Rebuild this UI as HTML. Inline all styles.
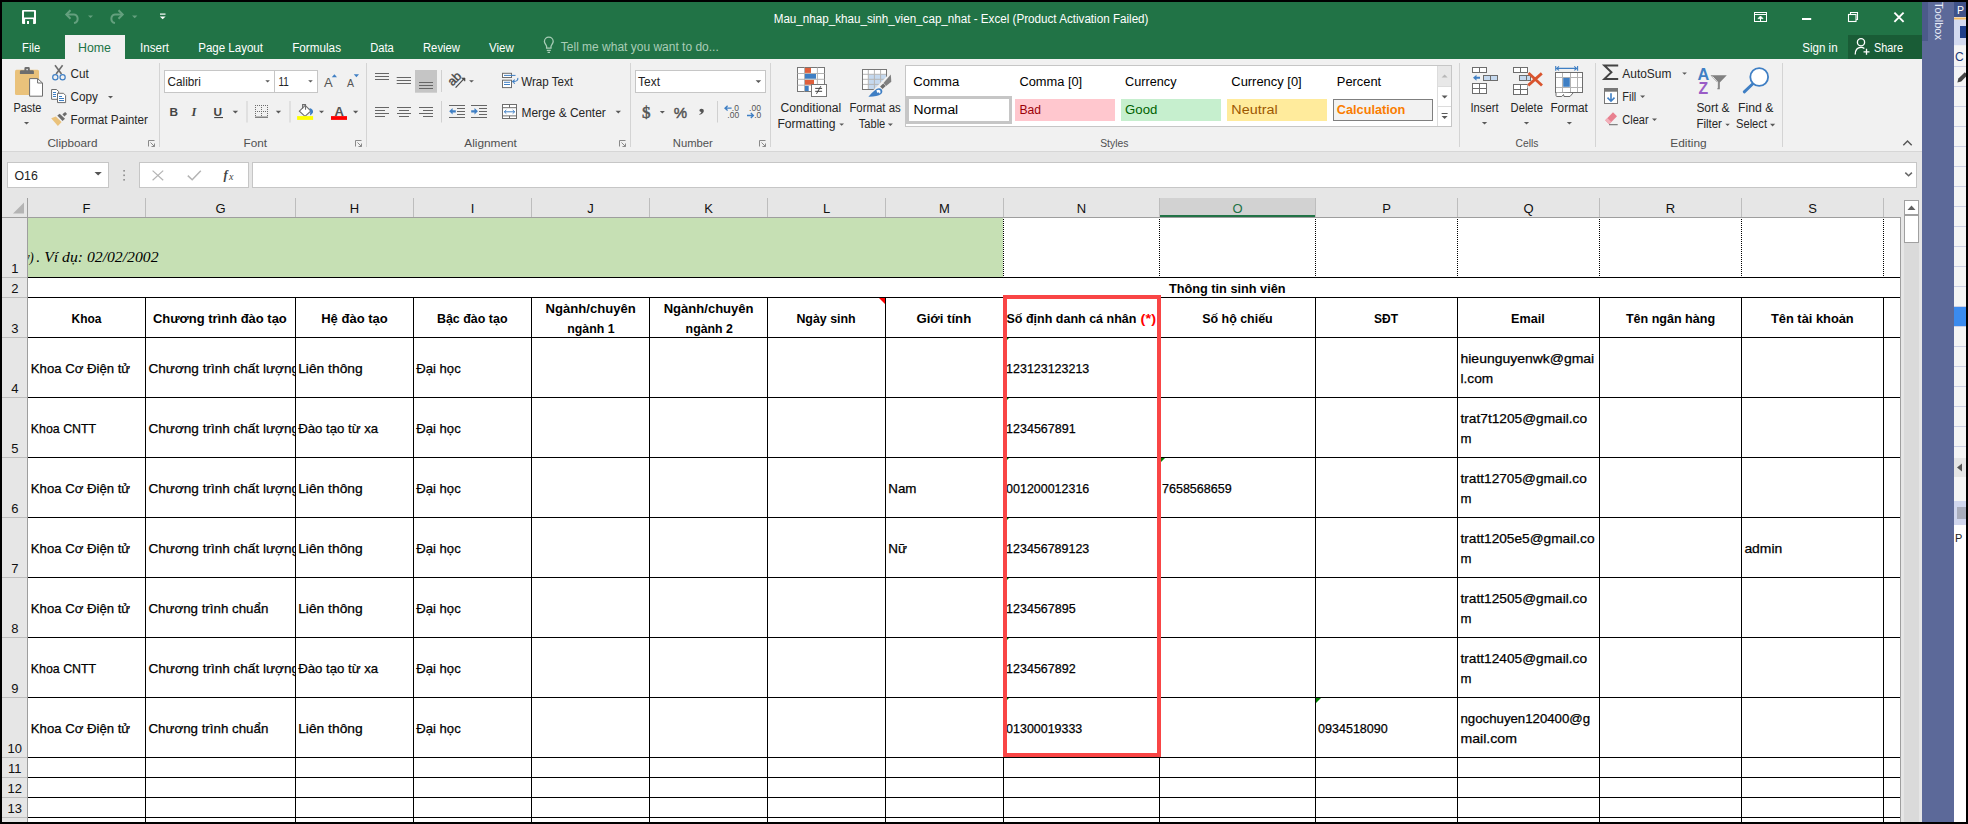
<!DOCTYPE html>
<html><head><meta charset="utf-8"><title>Excel</title>
<style>html,body{margin:0;padding:0;background:#000;overflow:hidden;font-family:"Liberation Sans",sans-serif}svg{display:block}text{white-space:pre}</style>
</head><body>
<svg width="1968" height="824" viewBox="0 0 1968 824" font-family="Liberation Sans, sans-serif">
<defs>
<clipPath id="clipF"><rect x="28" y="218" width="975" height="59"/></clipPath>
<clipPath id="clipG"><rect x="146" y="298" width="149" height="460"/></clipPath>
</defs>
<rect x="0" y="0" width="1968" height="824" fill="#000" />
<rect x="2" y="2" width="1920" height="57" fill="#217346" />
<rect x="2" y="59" width="1920" height="92" fill="#f1f1f1" />
<rect x="2" y="151" width="1920" height="1" fill="#d6d6d6" />
<rect x="2" y="152" width="1920" height="670" fill="#e6e6e6" />
<text x="773.7" y="23" font-size="12" fill="#ffffff" textLength="374.8" lengthAdjust="spacingAndGlyphs" >Mau_nhap_khau_sinh_vien_cap_nhat - Excel (Product Activation Failed)</text>
<rect x="65" y="35" width="60" height="24" fill="#f1f1f1" />
<text x="22.1" y="51.5" font-size="12" fill="#ffffff" textLength="18.0" lengthAdjust="spacingAndGlyphs" >File</text>
<text x="140" y="51.5" font-size="12" fill="#ffffff" textLength="29.0" lengthAdjust="spacingAndGlyphs" >Insert</text>
<text x="198.2" y="51.5" font-size="12" fill="#ffffff" textLength="64.8" lengthAdjust="spacingAndGlyphs" >Page Layout</text>
<text x="292.2" y="51.5" font-size="12" fill="#ffffff" textLength="48.8" lengthAdjust="spacingAndGlyphs" >Formulas</text>
<text x="370.2" y="51.5" font-size="12" fill="#ffffff" textLength="23.6" lengthAdjust="spacingAndGlyphs" >Data</text>
<text x="423" y="51.5" font-size="12" fill="#ffffff" textLength="36.9" lengthAdjust="spacingAndGlyphs" >Review</text>
<text x="488.9" y="51.5" font-size="12" fill="#ffffff" textLength="24.9" lengthAdjust="spacingAndGlyphs" >View</text>
<text x="78" y="51.5" font-size="12" fill="#217346" textLength="33.0" lengthAdjust="spacingAndGlyphs" >Home</text>
<text x="560.8" y="51" font-size="12" fill="#a9cdb7" textLength="158.0" lengthAdjust="spacingAndGlyphs" >Tell me what you want to do...</text>
<text x="1802.2" y="51.5" font-size="12" fill="#ffffff" textLength="35.4" lengthAdjust="spacingAndGlyphs" >Sign in</text>
<rect x="1848" y="35" width="74" height="24" fill="#195c36" />
<text x="1874" y="51.5" font-size="12" fill="#ffffff" textLength="29.0" lengthAdjust="spacingAndGlyphs" >Share</text>
<text x="13.4" y="111.7" font-size="12" fill="#262626" textLength="28.0" lengthAdjust="spacingAndGlyphs" >Paste</text>
<text x="70.5" y="78" font-size="12" fill="#262626" textLength="18.3" lengthAdjust="spacingAndGlyphs" >Cut</text>
<text x="70.5" y="100.6" font-size="12" fill="#262626" textLength="27.4" lengthAdjust="spacingAndGlyphs" >Copy</text>
<text x="70.5" y="123.8" font-size="12" fill="#262626" textLength="77.5" lengthAdjust="spacingAndGlyphs" >Format Painter</text>
<text x="47.4" y="146.8" font-size="11" fill="#505050" textLength="50.1" lengthAdjust="spacingAndGlyphs" >Clipboard</text>
<text x="243.5" y="146.8" font-size="11" fill="#505050" textLength="23.5" lengthAdjust="spacingAndGlyphs" >Font</text>
<text x="464.3" y="146.8" font-size="11" fill="#505050" textLength="52.6" lengthAdjust="spacingAndGlyphs" >Alignment</text>
<text x="672.8" y="146.8" font-size="11" fill="#505050" textLength="40.0" lengthAdjust="spacingAndGlyphs" >Number</text>
<text x="1100.2" y="146.8" font-size="11" fill="#505050" textLength="28.2" lengthAdjust="spacingAndGlyphs" >Styles</text>
<text x="1515.6" y="146.8" font-size="11" fill="#505050" textLength="22.8" lengthAdjust="spacingAndGlyphs" >Cells</text>
<text x="1670.3" y="146.8" font-size="11" fill="#505050" textLength="36.3" lengthAdjust="spacingAndGlyphs" >Editing</text>
<rect x="159" y="63" width="1" height="84" fill="#d4d4d4" />
<rect x="366" y="63" width="1" height="84" fill="#d4d4d4" />
<rect x="630" y="63" width="1" height="84" fill="#d4d4d4" />
<rect x="770" y="63" width="1" height="84" fill="#d4d4d4" />
<rect x="1459" y="63" width="1" height="84" fill="#d4d4d4" />
<rect x="1595" y="63" width="1" height="84" fill="#d4d4d4" />
<rect x="1782" y="63" width="1" height="84" fill="#d4d4d4" />
<rect x="164.5" y="70.5" width="110" height="22" fill="#ffffff" stroke="#c6c6c6" stroke-width="1"/>
<rect x="274.5" y="70.5" width="43" height="22" fill="#ffffff" stroke="#c6c6c6" stroke-width="1"/>
<text x="167.6" y="85.9" font-size="12" fill="#222" textLength="33.3" lengthAdjust="spacingAndGlyphs" >Calibri</text>
<text x="278.5" y="85.9" font-size="12" fill="#222" textLength="10.3" lengthAdjust="spacingAndGlyphs" >11</text>
<rect x="635.5" y="70.5" width="130" height="22" fill="#ffffff" stroke="#c6c6c6" stroke-width="1"/>
<text x="638.1" y="85.8" font-size="12" fill="#222" textLength="21.9" lengthAdjust="spacingAndGlyphs" >Text</text>
<text x="521.2" y="85.9" font-size="12" fill="#262626" textLength="51.8" lengthAdjust="spacingAndGlyphs" >Wrap Text</text>
<text x="521.5" y="116.9" font-size="12" fill="#262626" textLength="84.3" lengthAdjust="spacingAndGlyphs" >Merge &amp; Center</text>
<text x="780.6" y="111.9" font-size="12" fill="#262626" textLength="60.7" lengthAdjust="spacingAndGlyphs" >Conditional</text>
<text x="777.4" y="127.8" font-size="12" fill="#262626" textLength="58.0" lengthAdjust="spacingAndGlyphs" >Formatting</text>
<text x="849.4" y="111.9" font-size="12" fill="#262626" textLength="51.3" lengthAdjust="spacingAndGlyphs" >Format as</text>
<text x="858.7" y="127.8" font-size="12" fill="#262626" textLength="26.6" lengthAdjust="spacingAndGlyphs" >Table</text>
<rect x="905.5" y="65.5" width="546" height="61" fill="#ffffff" stroke="#c6c6c6" stroke-width="1"/>
<text x="913.3" y="85.6" font-size="12" fill="#000" textLength="46.0" lengthAdjust="spacingAndGlyphs" >Comma</text>
<text x="1019.4" y="85.6" font-size="12" fill="#000" textLength="62.8" lengthAdjust="spacingAndGlyphs" >Comma [0]</text>
<text x="1125.1" y="85.6" font-size="12" fill="#000" textLength="51.4" lengthAdjust="spacingAndGlyphs" >Currency</text>
<text x="1231.3" y="85.6" font-size="12" fill="#000" textLength="70.4" lengthAdjust="spacingAndGlyphs" >Currency [0]</text>
<text x="1336.8" y="85.6" font-size="12" fill="#000" textLength="44.4" lengthAdjust="spacingAndGlyphs" >Percent</text>
<rect x="907.5" y="97.5" width="103" height="25" fill="#ffffff" stroke="#c6c6c6" stroke-width="3"/>
<text x="913.5" y="113.7" font-size="12" fill="#000" textLength="44.7" lengthAdjust="spacingAndGlyphs" >Normal</text>
<rect x="1015" y="99" width="100" height="22" fill="#ffc7ce" />
<text x="1019.4" y="113.7" font-size="12" fill="#9c0006" textLength="21.6" lengthAdjust="spacingAndGlyphs" >Bad</text>
<rect x="1121" y="99" width="100" height="22" fill="#c6efce" />
<text x="1125.1" y="113.7" font-size="12" fill="#006100" textLength="32.3" lengthAdjust="spacingAndGlyphs" >Good</text>
<rect x="1227" y="99" width="100" height="22" fill="#ffeb9c" />
<text x="1231.3" y="113.7" font-size="12" fill="#9c5700" textLength="46.3" lengthAdjust="spacingAndGlyphs" >Neutral</text>
<rect x="1333.5" y="99.5" width="99" height="21" fill="#f2f2f2" stroke="#7f7f7f" stroke-width="1"/>
<text x="1336.8" y="113.7" font-size="12" fill="#fa7d00" font-weight="bold" textLength="68.6" lengthAdjust="spacingAndGlyphs" >Calculation</text>
<rect x="1437" y="66" width="1" height="60" fill="#dcdcdc" />
<rect x="1438" y="66" width="13" height="20" fill="#e8e8e8" />
<rect x="1438" y="86" width="13" height="1" fill="#dcdcdc" />
<rect x="1438" y="106" width="13" height="1" fill="#dcdcdc" />
<text x="1470.5" y="111.9" font-size="12" fill="#262626" textLength="28.0" lengthAdjust="spacingAndGlyphs" >Insert</text>
<text x="1510.6" y="111.9" font-size="12" fill="#262626" textLength="32.3" lengthAdjust="spacingAndGlyphs" >Delete</text>
<text x="1550.4" y="111.9" font-size="12" fill="#262626" textLength="37.5" lengthAdjust="spacingAndGlyphs" >Format</text>
<text x="1622.3" y="77.5" font-size="12" fill="#262626" textLength="49.1" lengthAdjust="spacingAndGlyphs" >AutoSum</text>
<text x="1622.3" y="100.6" font-size="12" fill="#262626" textLength="14.0" lengthAdjust="spacingAndGlyphs" >Fill</text>
<text x="1622.3" y="123.9" font-size="12" fill="#262626" textLength="26.4" lengthAdjust="spacingAndGlyphs" >Clear</text>
<text x="1696.4" y="111.7" font-size="12" fill="#262626" textLength="33.2" lengthAdjust="spacingAndGlyphs" >Sort &amp;</text>
<text x="1696.4" y="127.9" font-size="12" fill="#262626" textLength="25.5" lengthAdjust="spacingAndGlyphs" >Filter</text>
<text x="1738" y="111.7" font-size="12" fill="#262626" textLength="35.5" lengthAdjust="spacingAndGlyphs" >Find &amp;</text>
<text x="1736" y="127.9" font-size="12" fill="#262626" textLength="31.0" lengthAdjust="spacingAndGlyphs" >Select</text>
<rect x="7.5" y="162.5" width="101" height="25" fill="#ffffff" stroke="#c6c6c6" stroke-width="1"/>
<text x="14.5" y="180" font-size="12" fill="#222" textLength="23.3" lengthAdjust="spacingAndGlyphs" >O16</text>
<rect x="139.5" y="162.5" width="109" height="25" fill="#ffffff" stroke="#c6c6c6" stroke-width="1"/>
<rect x="252.5" y="162.5" width="1664" height="25" fill="#ffffff" stroke="#c6c6c6" stroke-width="1"/>
<rect x="28" y="218" width="1872" height="604" fill="#ffffff" />
<rect x="1159" y="198" width="156" height="19" fill="#d2d2d2" />
<rect x="1159" y="215" width="156" height="2" fill="#217346" />
<rect x="145" y="198" width="1" height="19" fill="#bdbdbd" />
<rect x="295" y="198" width="1" height="19" fill="#bdbdbd" />
<rect x="413" y="198" width="1" height="19" fill="#bdbdbd" />
<rect x="531" y="198" width="1" height="19" fill="#bdbdbd" />
<rect x="649" y="198" width="1" height="19" fill="#bdbdbd" />
<rect x="767" y="198" width="1" height="19" fill="#bdbdbd" />
<rect x="885" y="198" width="1" height="19" fill="#bdbdbd" />
<rect x="1003" y="198" width="1" height="19" fill="#bdbdbd" />
<rect x="1159" y="198" width="1" height="19" fill="#bdbdbd" />
<rect x="1315" y="198" width="1" height="19" fill="#bdbdbd" />
<rect x="1457" y="198" width="1" height="19" fill="#bdbdbd" />
<rect x="1599" y="198" width="1" height="19" fill="#bdbdbd" />
<rect x="1741" y="198" width="1" height="19" fill="#bdbdbd" />
<rect x="1883" y="198" width="1" height="19" fill="#bdbdbd" />
<rect x="2" y="217" width="1898" height="1" fill="#9e9e9e" />
<rect x="27" y="198" width="1" height="624" fill="#9e9e9e" />
<rect x="1900" y="217" width="1" height="605" fill="#9e9e9e" />
<text x="86.5" y="212.8" font-size="13" fill="#111" text-anchor="middle" >F</text>
<text x="220.5" y="212.8" font-size="13" fill="#111" text-anchor="middle" >G</text>
<text x="354.5" y="212.8" font-size="13" fill="#111" text-anchor="middle" >H</text>
<text x="472.5" y="212.8" font-size="13" fill="#111" text-anchor="middle" >I</text>
<text x="590.5" y="212.8" font-size="13" fill="#111" text-anchor="middle" >J</text>
<text x="708.5" y="212.8" font-size="13" fill="#111" text-anchor="middle" >K</text>
<text x="826.5" y="212.8" font-size="13" fill="#111" text-anchor="middle" >L</text>
<text x="944.5" y="212.8" font-size="13" fill="#111" text-anchor="middle" >M</text>
<text x="1081.5" y="212.8" font-size="13" fill="#111" text-anchor="middle" >N</text>
<text x="1237.5" y="212.8" font-size="13" fill="#217346" text-anchor="middle" >O</text>
<text x="1386.5" y="212.8" font-size="13" fill="#111" text-anchor="middle" >P</text>
<text x="1528.5" y="212.8" font-size="13" fill="#111" text-anchor="middle" >Q</text>
<text x="1670.5" y="212.8" font-size="13" fill="#111" text-anchor="middle" >R</text>
<text x="1812.5" y="212.8" font-size="13" fill="#111" text-anchor="middle" >S</text>
<path d="M13 213.5 L24 213.5 L24 202.5 Z" fill="#b4b4b4"/>
<rect x="2" y="277" width="25" height="1" fill="#bdbdbd" />
<rect x="2" y="297" width="25" height="1" fill="#bdbdbd" />
<rect x="2" y="337" width="25" height="1" fill="#bdbdbd" />
<rect x="2" y="397" width="25" height="1" fill="#bdbdbd" />
<rect x="2" y="457" width="25" height="1" fill="#bdbdbd" />
<rect x="2" y="517" width="25" height="1" fill="#bdbdbd" />
<rect x="2" y="577" width="25" height="1" fill="#bdbdbd" />
<rect x="2" y="637" width="25" height="1" fill="#bdbdbd" />
<rect x="2" y="697" width="25" height="1" fill="#bdbdbd" />
<rect x="2" y="757" width="25" height="1" fill="#bdbdbd" />
<rect x="2" y="777" width="25" height="1" fill="#bdbdbd" />
<rect x="2" y="797" width="25" height="1" fill="#bdbdbd" />
<rect x="2" y="817" width="25" height="1" fill="#bdbdbd" />
<text x="14.8" y="272.5" font-size="13" fill="#111" text-anchor="middle" >1</text>
<text x="14.8" y="292.5" font-size="13" fill="#111" text-anchor="middle" >2</text>
<text x="14.8" y="332.5" font-size="13" fill="#111" text-anchor="middle" >3</text>
<text x="14.8" y="392.5" font-size="13" fill="#111" text-anchor="middle" >4</text>
<text x="14.8" y="452.5" font-size="13" fill="#111" text-anchor="middle" >5</text>
<text x="14.8" y="512.5" font-size="13" fill="#111" text-anchor="middle" >6</text>
<text x="14.8" y="572.5" font-size="13" fill="#111" text-anchor="middle" >7</text>
<text x="14.8" y="632.5" font-size="13" fill="#111" text-anchor="middle" >8</text>
<text x="14.8" y="692.5" font-size="13" fill="#111" text-anchor="middle" >9</text>
<text x="14.8" y="752.5" font-size="13" fill="#111" text-anchor="middle" >10</text>
<text x="14.8" y="772.5" font-size="13" fill="#111" text-anchor="middle" >11</text>
<text x="14.8" y="792.5" font-size="13" fill="#111" text-anchor="middle" >12</text>
<text x="14.8" y="812.5" font-size="13" fill="#111" text-anchor="middle" >13</text>
<text x="14.8" y="837.5" font-size="13" fill="#262626" text-anchor="middle" >14</text>
<rect x="28" y="218" width="975" height="59" fill="#c6e0b4" />
<rect x="28" y="277" width="1872" height="1" fill="#000000" />
<rect x="28" y="297" width="1872" height="1" fill="#000000" />
<rect x="28" y="337" width="1872" height="1" fill="#000000" />
<rect x="28" y="397" width="1872" height="1" fill="#000000" />
<rect x="28" y="457" width="1872" height="1" fill="#000000" />
<rect x="28" y="517" width="1872" height="1" fill="#000000" />
<rect x="28" y="577" width="1872" height="1" fill="#000000" />
<rect x="28" y="637" width="1872" height="1" fill="#000000" />
<rect x="28" y="697" width="1872" height="1" fill="#000000" />
<rect x="28" y="757" width="1872" height="1" fill="#000000" />
<rect x="28" y="777" width="1872" height="1" fill="#000000" />
<rect x="28" y="797" width="1872" height="1" fill="#000000" />
<rect x="28" y="817" width="1872" height="1" fill="#000000" />
<line x1="1003.5" y1="219" x2="1003.5" y2="277" stroke="#000" stroke-width="1" stroke-dasharray="1,1"/>
<line x1="1159.5" y1="219" x2="1159.5" y2="277" stroke="#000" stroke-width="1" stroke-dasharray="1,1"/>
<line x1="1315.5" y1="219" x2="1315.5" y2="277" stroke="#000" stroke-width="1" stroke-dasharray="1,1"/>
<line x1="1457.5" y1="219" x2="1457.5" y2="277" stroke="#000" stroke-width="1" stroke-dasharray="1,1"/>
<line x1="1599.5" y1="219" x2="1599.5" y2="277" stroke="#000" stroke-width="1" stroke-dasharray="1,1"/>
<line x1="1741.5" y1="219" x2="1741.5" y2="277" stroke="#000" stroke-width="1" stroke-dasharray="1,1"/>
<line x1="1883.5" y1="219" x2="1883.5" y2="277" stroke="#000" stroke-width="1" stroke-dasharray="1,1"/>
<rect x="145" y="297" width="1" height="525" fill="#000000" />
<rect x="295" y="297" width="1" height="525" fill="#000000" />
<rect x="413" y="297" width="1" height="525" fill="#000000" />
<rect x="531" y="297" width="1" height="525" fill="#000000" />
<rect x="649" y="297" width="1" height="525" fill="#000000" />
<rect x="767" y="297" width="1" height="525" fill="#000000" />
<rect x="885" y="297" width="1" height="525" fill="#000000" />
<rect x="1003" y="297" width="1" height="525" fill="#000000" />
<rect x="1159" y="297" width="1" height="525" fill="#000000" />
<rect x="1315" y="297" width="1" height="525" fill="#000000" />
<rect x="1457" y="297" width="1" height="525" fill="#000000" />
<rect x="1599" y="297" width="1" height="525" fill="#000000" />
<rect x="1741" y="297" width="1" height="525" fill="#000000" />
<rect x="1883" y="297" width="1" height="525" fill="#000000" />
<text x="24" y="261.7" font-size="15.4" fill="#000" font-style="italic" font-family="Liberation Serif" textLength="9.8" lengthAdjust="spacingAndGlyphs" clip-path="url(#clipF)">y)</text>
<text x="36.3" y="261.7" font-size="15.4" fill="#000" font-style="italic" font-family="Liberation Serif" textLength="122.2" lengthAdjust="spacingAndGlyphs" clip-path="url(#clipF)">. Ví dụ: 02/02/2002</text>
<text x="1169" y="292.7" font-size="13" fill="#000" font-weight="bold" textLength="116.5" lengthAdjust="spacingAndGlyphs" >Thông tin sinh viên</text>
<text x="71.5" y="322.7" font-size="13" fill="#000" font-weight="bold" textLength="29.9" lengthAdjust="spacingAndGlyphs" >Khoa</text>
<text x="152.9" y="322.7" font-size="13" fill="#000" font-weight="bold" textLength="133.9" lengthAdjust="spacingAndGlyphs" >Chương trình đào tạo</text>
<text x="321.2" y="322.7" font-size="13" fill="#000" font-weight="bold" textLength="66.6" lengthAdjust="spacingAndGlyphs" >Hệ đào tạo</text>
<text x="436.9" y="322.7" font-size="13" fill="#000" font-weight="bold" textLength="70.6" lengthAdjust="spacingAndGlyphs" >Bậc đào tạo</text>
<text x="796.4" y="322.7" font-size="13" fill="#000" font-weight="bold" textLength="59.3" lengthAdjust="spacingAndGlyphs" >Ngày sinh</text>
<text x="916.4" y="322.7" font-size="13" fill="#000" font-weight="bold" textLength="54.8" lengthAdjust="spacingAndGlyphs" >Giới tính</text>
<text x="1006.5" y="322.7" font-size="13" fill="#000" font-weight="bold" textLength="129.9" lengthAdjust="spacingAndGlyphs" >Số định danh cá nhân</text>
<text x="1202.2" y="322.7" font-size="13" fill="#000" font-weight="bold" textLength="70.5" lengthAdjust="spacingAndGlyphs" >Số hộ chiếu</text>
<text x="1374" y="322.7" font-size="13" fill="#000" font-weight="bold" textLength="24.0" lengthAdjust="spacingAndGlyphs" >SĐT</text>
<text x="1511.1" y="322.7" font-size="13" fill="#000" font-weight="bold" textLength="33.6" lengthAdjust="spacingAndGlyphs" >Email</text>
<text x="1625.9" y="322.7" font-size="13" fill="#000" font-weight="bold" textLength="89.2" lengthAdjust="spacingAndGlyphs" >Tên ngân hàng</text>
<text x="1771" y="322.7" font-size="13" fill="#000" font-weight="bold" textLength="82.7" lengthAdjust="spacingAndGlyphs" >Tên tài khoản</text>
<text x="1140.6" y="322.7" font-size="13" fill="#ff0000" font-weight="bold" textLength="15.4" lengthAdjust="spacingAndGlyphs" >(*)</text>
<text x="545.6" y="312.9" font-size="13" fill="#000" font-weight="bold" textLength="90.2" lengthAdjust="spacingAndGlyphs" >Ngành/chuyên</text>
<text x="567.3" y="332.8" font-size="13" fill="#000" font-weight="bold" textLength="47.3" lengthAdjust="spacingAndGlyphs" >ngành 1</text>
<text x="663.7" y="312.9" font-size="13" fill="#000" font-weight="bold" textLength="89.9" lengthAdjust="spacingAndGlyphs" >Ngành/chuyên</text>
<text x="685.6" y="332.8" font-size="13" fill="#000" font-weight="bold" textLength="47.3" lengthAdjust="spacingAndGlyphs" >ngành 2</text>
<text x="30.8" y="373" font-size="13" fill="#000" textLength="99.4" lengthAdjust="spacingAndGlyphs" stroke="#000" stroke-width="0.25">Khoa Cơ Điện tử</text>
<text x="148.5" y="373" font-size="13" fill="#000" textLength="150.5" lengthAdjust="spacingAndGlyphs" clip-path="url(#clipG)" stroke="#000" stroke-width="0.25">Chương trình chất lượng</text>
<text x="298.2" y="373" font-size="13" fill="#000" textLength="64.5" lengthAdjust="spacingAndGlyphs" stroke="#000" stroke-width="0.25">Liên thông</text>
<text x="416.3" y="373" font-size="13" fill="#000" textLength="44.4" lengthAdjust="spacingAndGlyphs" stroke="#000" stroke-width="0.25">Đại học</text>
<text x="1006.1" y="373" font-size="13" fill="#000" textLength="83.2" lengthAdjust="spacingAndGlyphs" stroke="#000" stroke-width="0.25">123123123213</text>
<text x="1460.5" y="363" font-size="13" fill="#000" textLength="133.7" lengthAdjust="spacingAndGlyphs" stroke="#000" stroke-width="0.25">hieunguyenwk@gmai</text>
<text x="1460.5" y="383" font-size="13" fill="#000" textLength="32.7" lengthAdjust="spacingAndGlyphs" stroke="#000" stroke-width="0.25">l.com</text>
<path d="M1004 338 L1009 338 L1004 343 Z" fill="#008000"/>
<text x="30.8" y="433" font-size="13" fill="#000" textLength="65.4" lengthAdjust="spacingAndGlyphs" stroke="#000" stroke-width="0.25">Khoa CNTT</text>
<text x="148.5" y="433" font-size="13" fill="#000" textLength="150.5" lengthAdjust="spacingAndGlyphs" clip-path="url(#clipG)" stroke="#000" stroke-width="0.25">Chương trình chất lượng</text>
<text x="298.2" y="433" font-size="13" fill="#000" textLength="80.0" lengthAdjust="spacingAndGlyphs" stroke="#000" stroke-width="0.25">Đào tạo từ xa</text>
<text x="416.3" y="433" font-size="13" fill="#000" textLength="44.4" lengthAdjust="spacingAndGlyphs" stroke="#000" stroke-width="0.25">Đại học</text>
<text x="1006.1" y="433" font-size="13" fill="#000" textLength="69.5" lengthAdjust="spacingAndGlyphs" stroke="#000" stroke-width="0.25">1234567891</text>
<text x="1460.5" y="423" font-size="13" fill="#000" textLength="126.5" lengthAdjust="spacingAndGlyphs" stroke="#000" stroke-width="0.25">trat7t1205@gmail.co</text>
<text x="1460.5" y="443" font-size="13" fill="#000" textLength="11.0" lengthAdjust="spacingAndGlyphs" stroke="#000" stroke-width="0.25">m</text>
<path d="M1004 398 L1009 398 L1004 403 Z" fill="#008000"/>
<text x="30.8" y="493" font-size="13" fill="#000" textLength="99.4" lengthAdjust="spacingAndGlyphs" stroke="#000" stroke-width="0.25">Khoa Cơ Điện tử</text>
<text x="148.5" y="493" font-size="13" fill="#000" textLength="150.5" lengthAdjust="spacingAndGlyphs" clip-path="url(#clipG)" stroke="#000" stroke-width="0.25">Chương trình chất lượng</text>
<text x="298.2" y="493" font-size="13" fill="#000" textLength="64.5" lengthAdjust="spacingAndGlyphs" stroke="#000" stroke-width="0.25">Liên thông</text>
<text x="416.3" y="493" font-size="13" fill="#000" textLength="44.4" lengthAdjust="spacingAndGlyphs" stroke="#000" stroke-width="0.25">Đại học</text>
<text x="888.3" y="493" font-size="13" fill="#000" textLength="28.2" lengthAdjust="spacingAndGlyphs" stroke="#000" stroke-width="0.25">Nam</text>
<text x="1006.1" y="493" font-size="13" fill="#000" textLength="83.2" lengthAdjust="spacingAndGlyphs" stroke="#000" stroke-width="0.25">001200012316</text>
<text x="1162" y="493" font-size="13" fill="#000" textLength="69.6" lengthAdjust="spacingAndGlyphs" stroke="#000" stroke-width="0.25">7658568659</text>
<text x="1460.5" y="483" font-size="13" fill="#000" textLength="126.3" lengthAdjust="spacingAndGlyphs" stroke="#000" stroke-width="0.25">tratt12705@gmail.co</text>
<text x="1460.5" y="503" font-size="13" fill="#000" textLength="11.0" lengthAdjust="spacingAndGlyphs" stroke="#000" stroke-width="0.25">m</text>
<path d="M1004 458 L1009 458 L1004 463 Z" fill="#008000"/>
<text x="30.8" y="553" font-size="13" fill="#000" textLength="99.4" lengthAdjust="spacingAndGlyphs" stroke="#000" stroke-width="0.25">Khoa Cơ Điện tử</text>
<text x="148.5" y="553" font-size="13" fill="#000" textLength="150.5" lengthAdjust="spacingAndGlyphs" clip-path="url(#clipG)" stroke="#000" stroke-width="0.25">Chương trình chất lượng</text>
<text x="298.2" y="553" font-size="13" fill="#000" textLength="64.5" lengthAdjust="spacingAndGlyphs" stroke="#000" stroke-width="0.25">Liên thông</text>
<text x="416.3" y="553" font-size="13" fill="#000" textLength="44.4" lengthAdjust="spacingAndGlyphs" stroke="#000" stroke-width="0.25">Đại học</text>
<text x="888.3" y="553" font-size="13" fill="#000" textLength="18.7" lengthAdjust="spacingAndGlyphs" stroke="#000" stroke-width="0.25">Nữ</text>
<text x="1006.1" y="553" font-size="13" fill="#000" textLength="83.2" lengthAdjust="spacingAndGlyphs" stroke="#000" stroke-width="0.25">123456789123</text>
<text x="1460.5" y="543" font-size="13" fill="#000" textLength="134.0" lengthAdjust="spacingAndGlyphs" stroke="#000" stroke-width="0.25">tratt1205e5@gmail.co</text>
<text x="1460.5" y="563" font-size="13" fill="#000" textLength="11.0" lengthAdjust="spacingAndGlyphs" stroke="#000" stroke-width="0.25">m</text>
<text x="1744.4" y="553" font-size="13" fill="#000" textLength="37.8" lengthAdjust="spacingAndGlyphs" stroke="#000" stroke-width="0.25">admin</text>
<path d="M1004 518 L1009 518 L1004 523 Z" fill="#008000"/>
<text x="30.8" y="613" font-size="13" fill="#000" textLength="99.4" lengthAdjust="spacingAndGlyphs" stroke="#000" stroke-width="0.25">Khoa Cơ Điện tử</text>
<text x="148.5" y="613" font-size="13" fill="#000" textLength="119.8" lengthAdjust="spacingAndGlyphs" stroke="#000" stroke-width="0.25">Chương trình chuẩn</text>
<text x="298.2" y="613" font-size="13" fill="#000" textLength="64.5" lengthAdjust="spacingAndGlyphs" stroke="#000" stroke-width="0.25">Liên thông</text>
<text x="416.3" y="613" font-size="13" fill="#000" textLength="44.4" lengthAdjust="spacingAndGlyphs" stroke="#000" stroke-width="0.25">Đại học</text>
<text x="1006.1" y="613" font-size="13" fill="#000" textLength="69.5" lengthAdjust="spacingAndGlyphs" stroke="#000" stroke-width="0.25">1234567895</text>
<text x="1460.5" y="603" font-size="13" fill="#000" textLength="126.5" lengthAdjust="spacingAndGlyphs" stroke="#000" stroke-width="0.25">tratt12505@gmail.co</text>
<text x="1460.5" y="623" font-size="13" fill="#000" textLength="11.0" lengthAdjust="spacingAndGlyphs" stroke="#000" stroke-width="0.25">m</text>
<path d="M1004 578 L1009 578 L1004 583 Z" fill="#008000"/>
<text x="30.8" y="673" font-size="13" fill="#000" textLength="65.4" lengthAdjust="spacingAndGlyphs" stroke="#000" stroke-width="0.25">Khoa CNTT</text>
<text x="148.5" y="673" font-size="13" fill="#000" textLength="150.5" lengthAdjust="spacingAndGlyphs" clip-path="url(#clipG)" stroke="#000" stroke-width="0.25">Chương trình chất lượng</text>
<text x="298.2" y="673" font-size="13" fill="#000" textLength="80.0" lengthAdjust="spacingAndGlyphs" stroke="#000" stroke-width="0.25">Đào tạo từ xa</text>
<text x="416.3" y="673" font-size="13" fill="#000" textLength="44.4" lengthAdjust="spacingAndGlyphs" stroke="#000" stroke-width="0.25">Đại học</text>
<text x="1006.1" y="673" font-size="13" fill="#000" textLength="69.5" lengthAdjust="spacingAndGlyphs" stroke="#000" stroke-width="0.25">1234567892</text>
<text x="1460.5" y="663" font-size="13" fill="#000" textLength="126.5" lengthAdjust="spacingAndGlyphs" stroke="#000" stroke-width="0.25">tratt12405@gmail.co</text>
<text x="1460.5" y="683" font-size="13" fill="#000" textLength="11.0" lengthAdjust="spacingAndGlyphs" stroke="#000" stroke-width="0.25">m</text>
<path d="M1004 638 L1009 638 L1004 643 Z" fill="#008000"/>
<text x="30.8" y="733" font-size="13" fill="#000" textLength="99.4" lengthAdjust="spacingAndGlyphs" stroke="#000" stroke-width="0.25">Khoa Cơ Điện tử</text>
<text x="148.5" y="733" font-size="13" fill="#000" textLength="119.8" lengthAdjust="spacingAndGlyphs" stroke="#000" stroke-width="0.25">Chương trình chuẩn</text>
<text x="298.2" y="733" font-size="13" fill="#000" textLength="64.5" lengthAdjust="spacingAndGlyphs" stroke="#000" stroke-width="0.25">Liên thông</text>
<text x="416.3" y="733" font-size="13" fill="#000" textLength="44.4" lengthAdjust="spacingAndGlyphs" stroke="#000" stroke-width="0.25">Đại học</text>
<text x="1006.1" y="733" font-size="13" fill="#000" textLength="76.2" lengthAdjust="spacingAndGlyphs" stroke="#000" stroke-width="0.25">01300019333</text>
<text x="1318" y="733" font-size="13" fill="#000" textLength="69.8" lengthAdjust="spacingAndGlyphs" stroke="#000" stroke-width="0.25">0934518090</text>
<text x="1460.5" y="723" font-size="13" fill="#000" textLength="129.6" lengthAdjust="spacingAndGlyphs" stroke="#000" stroke-width="0.25">ngochuyen120400@g</text>
<text x="1460.5" y="743" font-size="13" fill="#000" textLength="56.4" lengthAdjust="spacingAndGlyphs" stroke="#000" stroke-width="0.25">mail.com</text>
<path d="M1004 698 L1009 698 L1004 703 Z" fill="#008000"/>
<path d="M1160 458 L1165 458 L1160 463 Z" fill="#008000"/>
<path d="M1316 698 L1321 698 L1316 703 Z" fill="#008000"/>
<path d="M879 298 L885 298 L885 304 Z" fill="#ff0000"/>
<rect x="1005" y="297" width="154" height="458" fill="none" stroke="#f94545" stroke-width="4"/>
<rect x="1901" y="198" width="21" height="624" fill="#e6e6e6" />
<rect x="1904" y="218" width="15" height="604" fill="#dadada" />
<rect x="1904.5" y="200.5" width="14" height="14" fill="#ffffff" stroke="#a0a0a0" stroke-width="1"/>
<path d="M1907.5 210 L1915.5 210 L1911.5 205.5 Z" fill="#606060"/>
<rect x="1904.5" y="215.5" width="14" height="27" fill="#ffffff" stroke="#a0a0a0" stroke-width="1"/>
<rect x="1922" y="2" width="32" height="820" fill="#5c6999" />
<rect x="1954" y="2" width="12" height="820" fill="#f5f5f5" />
<rect x="22" y="10" width="14" height="14" rx="1" fill="#fff"/>
<rect x="24" y="11.6" width="10" height="5.9" fill="#217346"/>
<rect x="25.1" y="19.1" width="8" height="4.9" fill="#217346"/>
<rect x="27" y="21" width="2" height="3" fill="#fff"/>
<path d="M66.5 14.5 H74 A4.3 4.3 0 0 1 74 23" fill="none" stroke="#64a07e" stroke-width="2"/>
<path d="M70.5 10.3 L66.3 14.5 L70.5 18.7" fill="none" stroke="#64a07e" stroke-width="2"/>
<path d="M88 15.6 L93 15.6 L90.5 18.1 Z" fill="#64a07e"/>
<path d="M122.5 14.5 H115 A4.3 4.3 0 0 0 115 23" fill="none" stroke="#64a07e" stroke-width="2"/>
<path d="M118.5 10.3 L122.7 14.5 L118.5 18.7" fill="none" stroke="#64a07e" stroke-width="2"/>
<path d="M132 15.6 L137.4 15.6 L134.7 18.300000000000004 Z" fill="#64a07e"/>
<rect x="160" y="13.5" width="5.5" height="1.2" fill="#fff"/>
<path d="M159.8 16.4 L165.6 16.4 L162.7 19.29999999999999 Z" fill="#fff"/>
<path d="M546.6 48.2 V46.6 C546.6 45 544.4 43.6 544.4 41.6 A4.4 4.4 0 0 1 553.2 41.6 C553.2 43.6 551 45 551 46.6 V48.2 Z" fill="none" stroke="#a9cdb7" stroke-width="1.3"/>
<path d="M546.8 50.4 H550.8 M547.6 52.4 H550" stroke="#a9cdb7" stroke-width="1.3"/>
<rect x="1754.5" y="12.5" width="12" height="9" fill="none" stroke="#fff" stroke-width="1"/>
<rect x="1755" y="14" width="11" height="1" fill="#fff"/>
<path d="M1758 18.6 L1760.5 16 L1763 18.6 Z" fill="#fff" stroke="#fff" stroke-width="0.8"/>
<rect x="1760" y="17.5" width="1" height="4" fill="#fff"/>
<rect x="1802" y="18" width="9.2" height="2" fill="#fff"/>
<rect x="1848.5" y="14.5" width="7.5" height="7" fill="none" stroke="#fff" stroke-width="1.1"/>
<path d="M1850.5 14.2 V12.5 H1857.5 V19.5 H1856.2" fill="none" stroke="#fff" stroke-width="1.1"/>
<path d="M1894.4 12.6 L1903.6 21.8 M1903.6 12.6 L1894.4 21.8" stroke="#fff" stroke-width="1.9"/>
<circle cx="1861" cy="42.3" r="3.6" fill="none" stroke="#fff" stroke-width="1.3"/>
<path d="M1855.2 54.6 C1855.2 49.5 1857.5 47.3 1861 47.3 C1862.5 47.3 1863.6 47.8 1864.4 48.5" fill="none" stroke="#fff" stroke-width="1.3"/>
<path d="M1863.5 51.8 H1869.5 M1866.5 48.8 V54.8" stroke="#fff" stroke-width="1.3"/>
<rect x="15" y="69.8" width="24" height="25.2" rx="1.5" fill="#eac27b"/>
<path d="M19.9 74 V71.5 Q19.9 70.2 21.2 70.2 H24.4 V68.4 Q24.4 67.1 25.7 67.1 H28.5 Q29.8 67.1 29.8 68.4 V70.2 H32.6 Q33.9 70.2 33.9 71.5 V74 Z" fill="#6d6d6d"/>
<circle cx="27.1" cy="69.6" r="0.8" fill="#f1f1f1"/>
<path d="M29.6 78.6 H37.6 L42.5 83 V96.2 H29.6 Z" fill="#fff" stroke="#6d6d6d" stroke-width="1"/>
<path d="M37.6 78.6 V83 H42.5" fill="none" stroke="#6d6d6d" stroke-width="1"/>
<path d="M24 122 L29.1 122 L26.55 124.55 Z" fill="#595959"/>
<path d="M55 65.3 L61.5 74 M62.6 65.3 L56.1 74" stroke="#6d6d6d" stroke-width="1.6"/>
<circle cx="55.3" cy="77.2" r="2.6" fill="none" stroke="#3f7fc4" stroke-width="1.2"/>
<circle cx="62.6" cy="77.2" r="2.6" fill="none" stroke="#3f7fc4" stroke-width="1.2"/>
<path d="M51.6 89.5 H56.6 L58.6 91.5 V99.3 H51.6 Z" fill="#fff" stroke="#6d6d6d" stroke-width="1"/>
<rect x="53" y="92" width="3" height="1" fill="#3f7fc4"/>
<rect x="53" y="94" width="3" height="1" fill="#3f7fc4"/>
<rect x="53" y="96" width="3" height="1" fill="#3f7fc4"/>
<path d="M57.5 93.3 H63.5 L65.6 95.4 V102.6 H57.5 Z" fill="#fff" stroke="#6d6d6d" stroke-width="1"/>
<rect x="59" y="96" width="3" height="1" fill="#3f7fc4"/>
<rect x="59" y="98" width="5" height="1" fill="#3f7fc4"/>
<rect x="59" y="100" width="5" height="1" fill="#3f7fc4"/>
<path d="M108 96 L113 96 L110.5 98.5 Z" fill="#595959"/>
<path d="M51.2 118.3 L55.8 116.5 L61.6 122.1 L57.9 125.9 Z" fill="#eac27b"/>
<path d="M57.3 115.4 L59.7 113.8 L65 118.8 L62.5 121 Z" fill="#6d6d6d"/>
<path d="M62.4 114.3 L65.2 111.9 L67.1 113.9 L64.4 116.6 Z" fill="#6d6d6d"/>
<path d="M148.5 146.5 V140.5 H154.5" fill="none" stroke="#8a8a8a" stroke-width="1"/>
<path d="M150.5 142.5 L154.5 146.5 M154.5 143.5 V146.5 H151.5" fill="none" stroke="#8a8a8a" stroke-width="1"/>
<path d="M265.3 80.3 L269.9 80.3 L267.6 82.59999999999998 Z" fill="#595959"/>
<path d="M308.2 80.3 L312.8 80.3 L310.5 82.60000000000001 Z" fill="#595959"/>
<text x="324" y="86.8" font-size="13" fill="#555">A</text>
<path d="M331.8 77.3 L337 77.3 L334.4 74.3 Z" fill="#3f7fc4"/>
<text x="347" y="86.8" font-size="10.5" fill="#555">A</text>
<path d="M353.8 74.3 L359 74.3 L356.4 77.3 Z" fill="#3f7fc4"/>
<text x="169.6" y="115.6" font-size="11.8" font-weight="bold" fill="#444">B</text>
<text x="191.6" y="115.6" font-size="12.5" font-family="Liberation Serif" font-style="italic" font-weight="bold" fill="#444">I</text>
<text x="213.5" y="115.6" font-size="11.8" font-weight="bold" fill="#444">U</text>
<rect x="214.2" y="117" width="8.8" height="1.1" fill="#444"/>
<path d="M232.6 110.8 L238.1 110.8 L235.35 113.55 Z" fill="#595959"/>
<rect x="246.5" y="101" width="1" height="21.5" fill="#d0d0d0"/>
<rect x="289.5" y="101" width="1" height="21.5" fill="#d0d0d0"/>
<rect x="255" y="105" width="1" height="1" fill="#6d6d6d"/>
<rect x="255" y="111" width="1" height="1" fill="#6d6d6d"/>
<rect x="257" y="105" width="1" height="1" fill="#6d6d6d"/>
<rect x="257" y="111" width="1" height="1" fill="#6d6d6d"/>
<rect x="259" y="105" width="1" height="1" fill="#6d6d6d"/>
<rect x="259" y="111" width="1" height="1" fill="#6d6d6d"/>
<rect x="261" y="105" width="1" height="1" fill="#6d6d6d"/>
<rect x="261" y="111" width="1" height="1" fill="#6d6d6d"/>
<rect x="263" y="105" width="1" height="1" fill="#6d6d6d"/>
<rect x="263" y="111" width="1" height="1" fill="#6d6d6d"/>
<rect x="265" y="105" width="1" height="1" fill="#6d6d6d"/>
<rect x="265" y="111" width="1" height="1" fill="#6d6d6d"/>
<rect x="267" y="105" width="1" height="1" fill="#6d6d6d"/>
<rect x="267" y="111" width="1" height="1" fill="#6d6d6d"/>
<rect x="255" y="105" width="1" height="1" fill="#6d6d6d"/>
<rect x="261" y="105" width="1" height="1" fill="#6d6d6d"/>
<rect x="267" y="105" width="1" height="1" fill="#6d6d6d"/>
<rect x="255" y="107" width="1" height="1" fill="#6d6d6d"/>
<rect x="261" y="107" width="1" height="1" fill="#6d6d6d"/>
<rect x="267" y="107" width="1" height="1" fill="#6d6d6d"/>
<rect x="255" y="109" width="1" height="1" fill="#6d6d6d"/>
<rect x="261" y="109" width="1" height="1" fill="#6d6d6d"/>
<rect x="267" y="109" width="1" height="1" fill="#6d6d6d"/>
<rect x="255" y="111" width="1" height="1" fill="#6d6d6d"/>
<rect x="261" y="111" width="1" height="1" fill="#6d6d6d"/>
<rect x="267" y="111" width="1" height="1" fill="#6d6d6d"/>
<rect x="255" y="113" width="1" height="1" fill="#6d6d6d"/>
<rect x="261" y="113" width="1" height="1" fill="#6d6d6d"/>
<rect x="267" y="113" width="1" height="1" fill="#6d6d6d"/>
<rect x="255" y="115" width="1" height="1" fill="#6d6d6d"/>
<rect x="261" y="115" width="1" height="1" fill="#6d6d6d"/>
<rect x="267" y="115" width="1" height="1" fill="#6d6d6d"/>
<rect x="255" y="116.6" width="13" height="1.2" fill="#666"/>
<path d="M275.8 110.8 L281.1 110.8 L278.45000000000005 113.45 Z" fill="#595959"/>
<path d="M299.4 111.2 L305.2 105.4 L310.9 111 L305 116.3 Z" fill="#fff" stroke="#6d6d6d" stroke-width="1.1"/>
<path d="M302.6 108.8 V104.6 H305.5 V109.8" fill="none" stroke="#6d6d6d" stroke-width="1.1"/>
<path d="M309.6 108 Q313.6 109.2 313 112.4 Q312.4 114 310 115.4 Q310.6 111.6 309.6 108 Z" fill="#3f7fc4"/>
<rect x="297.1" y="116.1" width="16" height="3.8" fill="#ffff00"/>
<path d="M319 110.8 L324.1 110.8 L321.55 113.35000000000001 Z" fill="#595959"/>
<text x="334.6" y="115.6" font-size="13" font-weight="bold" fill="#555">A</text>
<rect x="331" y="116.1" width="16" height="3.8" fill="#ff0000"/>
<path d="M353 110.8 L358.3 110.8 L355.65 113.45 Z" fill="#595959"/>
<path d="M355.5 146.5 V140.5 H361.5" fill="none" stroke="#8a8a8a" stroke-width="1"/>
<path d="M357.5 142.5 L361.5 146.5 M361.5 143.5 V146.5 H358.5" fill="none" stroke="#8a8a8a" stroke-width="1"/>
<rect x="375" y="73.00" width="14" height="1" fill="#666"/>
<rect x="375" y="76.00" width="14" height="1" fill="#666"/>
<rect x="375" y="79.00" width="14" height="1" fill="#666"/>
<rect x="396.7" y="77.00" width="14.300000000000011" height="1" fill="#666"/>
<rect x="396.7" y="80.00" width="14.300000000000011" height="1" fill="#666"/>
<rect x="396.7" y="83.00" width="14.300000000000011" height="1" fill="#666"/>
<rect x="415" y="70" width="22" height="22.7" fill="#c5c5c5"/>
<rect x="419" y="82.00" width="14" height="1" fill="#666"/>
<rect x="419" y="85.00" width="14" height="1" fill="#666"/>
<rect x="419" y="88.00" width="14" height="1" fill="#666"/>
<rect x="441" y="70" width="1" height="22" fill="#d0d0d0"/>
<rect x="441" y="101" width="1" height="21.5" fill="#d0d0d0"/>
<rect x="375" y="107" width="14" height="1" fill="#666"/>
<rect x="375" y="110" width="10" height="1" fill="#666"/>
<rect x="375" y="113" width="14" height="1" fill="#666"/>
<rect x="375" y="116" width="10" height="1" fill="#666"/>
<rect x="397" y="107" width="14" height="1" fill="#666"/>
<rect x="399" y="110" width="10" height="1" fill="#666"/>
<rect x="397" y="113" width="14" height="1" fill="#666"/>
<rect x="399" y="116" width="10" height="1" fill="#666"/>
<rect x="419" y="107" width="14" height="1" fill="#666"/>
<rect x="423" y="110" width="10" height="1" fill="#666"/>
<rect x="419" y="113" width="14" height="1" fill="#666"/>
<rect x="423" y="116" width="10" height="1" fill="#666"/>
<text x="0" y="0" font-size="12.5" fill="#4a4a4a" stroke="#4a4a4a" stroke-width="0.35" transform="translate(452.4 86.6) rotate(-45)">ab</text>
<path d="M455.6 87.6 L463.6 79.2" stroke="#4a4a4a" stroke-width="1.2"/>
<path d="M461.6 78 L465 78 L465 81.2 Z" fill="#4a4a4a" stroke="#4a4a4a" stroke-width="0.6"/>
<path d="M469.1 80.2 L473.9 80.2 L471.5 82.59999999999998 Z" fill="#595959"/>
<rect x="449" y="105.00" width="16" height="1" fill="#666"/>
<rect x="449" y="117.00" width="16" height="1" fill="#666"/>
<rect x="457" y="108.00" width="8" height="1" fill="#666"/>
<rect x="457" y="111.00" width="8" height="1" fill="#666"/>
<rect x="457" y="114.00" width="8" height="1" fill="#666"/>
<path d="M449.2 111.3 L452.6 108 V110.2 H455.8 V112.4 H452.6 V114.6 Z" fill="#3f7fc4"/>
<rect x="471" y="105.00" width="16" height="1" fill="#666"/>
<rect x="471" y="117.00" width="16" height="1" fill="#666"/>
<rect x="479" y="108.00" width="8" height="1" fill="#666"/>
<rect x="479" y="111.00" width="8" height="1" fill="#666"/>
<rect x="479" y="114.00" width="8" height="1" fill="#666"/>
<path d="M477.9 111.3 L474.5 108 V110.2 H471.2 V112.4 H474.5 V114.6 Z" fill="#3f7fc4"/>
<rect x="502.5" y="73.3" width="9" height="4.2" fill="#fff" stroke="#6d6d6d" stroke-width="1"/>
<rect x="502.5" y="80.2" width="9" height="7.4" fill="#fff" stroke="#6d6d6d" stroke-width="1"/>
<path d="M504 75.4 H515.5 M504 82.3 H510 M504 84.5 H510" stroke="#3f7fc4" stroke-width="1"/>
<path d="M517.8 77.8 Q518.5 81.6 512.8 81.6 M514.8 79.6 L512.6 81.6 L514.8 83.6" fill="none" stroke="#3f7fc4" stroke-width="1.1"/>
<rect x="502.5" y="104.5" width="14" height="14" fill="#fff" stroke="#6d6d6d" stroke-width="1"/>
<path d="M502.5 107.7 H516.5 M502.5 115.9 H516.5 M509.5 104.5 V107.7 M509.5 115.9 V118.5" stroke="#6d6d6d" stroke-width="1"/>
<path d="M504.3 111.8 H514.7 M506.3 110 L504.3 111.8 L506.3 113.6 M512.7 110 L514.7 111.8 L512.7 113.6" fill="none" stroke="#3f7fc4" stroke-width="1"/>
<path d="M615.6 110.8 L621 110.8 L618.3 113.49999999999999 Z" fill="#595959"/>
<path d="M619.5 146.5 V140.5 H625.5" fill="none" stroke="#8a8a8a" stroke-width="1"/>
<path d="M621.5 142.5 L625.5 146.5 M625.5 143.5 V146.5 H622.5" fill="none" stroke="#8a8a8a" stroke-width="1"/>
<path d="M755.6 80.3 L761.2 80.3 L758.4000000000001 83.10000000000001 Z" fill="#595959"/>
<text x="642" y="118" font-size="17" font-family="Liberation Serif" fill="#555" stroke="#555" stroke-width="0.5">$</text>
<path d="M659.8 110.9 L664.9 110.9 L662.3499999999999 113.45000000000002 Z" fill="#595959"/>
<text x="673.8" y="118" font-size="15" fill="#555" stroke="#555" stroke-width="0.45">%</text>
<path d="M701.2 108.8 Q703.9 108.8 703.8 111.2 Q703.6 113.6 699.4 114.8 L699.2 114.2 Q701.2 113.4 701.4 112 Q699.4 111.8 699.4 110.4 Q699.5 108.8 701.2 108.8 Z" fill="#555"/>
<rect x="717" y="101" width="1" height="21.5" fill="#d0d0d0"/>
<text x="731.8" y="110.9" font-size="8.5" fill="#555">.0</text>
<text x="727.3" y="118" font-size="8.5" fill="#555">.00</text>
<path d="M725 108.2 H731.6 M727.6 105.8 L725 108.2 L727.6 110.6" fill="none" stroke="#3f7fc4" stroke-width="1.3"/>
<text x="749.1" y="110.9" font-size="8.5" fill="#555">.00</text>
<text x="754.2" y="118" font-size="8.5" fill="#555">.0</text>
<path d="M747 115.5 H753.4 M750.8 113.1 L753.4 115.5 L750.8 117.9" fill="none" stroke="#3f7fc4" stroke-width="1.3"/>
<path d="M759.5 146.5 V140.5 H765.5" fill="none" stroke="#8a8a8a" stroke-width="1"/>
<path d="M761.5 142.5 L765.5 146.5 M765.5 143.5 V146.5 H762.5" fill="none" stroke="#8a8a8a" stroke-width="1"/>
<rect x="797.5" y="67.5" width="27" height="24" fill="#fff" stroke="#777" stroke-width="1"/>
<rect x="804.8" y="67.9" width="6.2" height="5" fill="#e0603c"/>
<rect x="804.8" y="74" width="11.2" height="4.8" fill="#3f7fc4"/>
<rect x="804.8" y="79.9" width="9.2" height="5" fill="#e0603c"/>
<rect x="804.8" y="85.8" width="3.9" height="5.2" fill="#3f7fc4"/>
<path d="M797.5 73.5 H824.5 M797.5 79.3 H824.5 M797.5 85.2 H824.5 M804.5 67.5 V91.5 M817.4 67.5 V91.5" stroke="#b4b4b4" stroke-width="1"/>
<rect x="811.5" y="84.5" width="15" height="12" fill="#fff" stroke="#777" stroke-width="1"/>
<path d="M815.2 88.4 H822.1 M815.2 91.3 H822.1 M816.5 93.8 L820.8 86.2" stroke="#444" stroke-width="1"/>
<path d="M839.3 123.5 L844 123.5 L841.65 125.85000000000002 Z" fill="#595959"/>
<rect x="862.5" y="69.5" width="24" height="20" fill="#fff" stroke="#777" stroke-width="1"/>
<rect x="868.5" y="74.5" width="18" height="15" fill="#c5d9ef"/>
<path d="M862.5 74.3 H886.5 M862.5 79.3 H886.5 M862.5 84.4 H886.5 M868.3 69.5 V89.5 M874.4 69.5 V89.5 M880.6 69.5 V89.5" stroke="#b4b4b4" stroke-width="1"/>
<rect x="862.5" y="69.5" width="24" height="20" fill="none" stroke="#777" stroke-width="1"/>
<path d="M887.6 75.4 L887.6 91 L872.4 91 Z" fill="#f1f1f1"/>
<path d="M883.5 82.9 L890.8 74.5 L891.3 81.7 L886.1 86.1 Z" fill="#808080"/>
<path d="M880.1 86.4 L883.3 83.6 L885.7 86 L882.5 88.9 Z" fill="#6d6d6d"/>
<path d="M868.4 96.8 Q872 92.2 876.4 88.9 Q879.6 87.2 881.7 89.4 Q883.3 91.7 881.1 94.1 Q877.4 96.9 868.4 96.8 Z" fill="#3f7fc4"/>
<path d="M876.3 90.4 Q878.6 88.9 880.3 90.6 Q880.9 92.5 879.9 93.7 L878.7 92.2 L877.5 92.9 Z" fill="#fff"/>
<path d="M887.9 123.5 L892.9 123.5 L890.4 126.0 Z" fill="#595959"/>
<path d="M1441.6 77.4 L1447.6 77.4 L1444.6 74.4 Z" fill="#b8b8b8"/>
<path d="M1441.6 95.5 L1447.6 95.5 L1444.6 98.5 Z" fill="#595959"/>
<rect x="1441.6" y="113" width="6" height="1" fill="#595959"/>
<path d="M1441.6 116 L1447.6 116 L1444.6 119.0 Z" fill="#595959"/>
<rect x="1472.5" y="67.5" width="14" height="5" fill="#fff" stroke="#6d6d6d" stroke-width="1"/>
<rect x="1479" y="67" width="1" height="6" fill="#6d6d6d"/>
<rect x="1483.5" y="75.5" width="14" height="5" fill="#c5d9ef" stroke="#6d6d6d" stroke-width="1"/>
<rect x="1490" y="75" width="1" height="6" fill="#6d6d6d"/>
<rect x="1472.5" y="83.5" width="14" height="10" fill="#fff" stroke="#6d6d6d" stroke-width="1"/>
<rect x="1479" y="83" width="1" height="11" fill="#6d6d6d"/>
<rect x="1472" y="88" width="15" height="1" fill="#6d6d6d"/>
<path d="M1473 77.8 L1476.5 74.8 V76.8 H1480 V78.8 H1476.5 V80.8 Z" fill="#3f7fc4"/>
<path d="M1481.9 121.9 L1487.2 121.9 L1484.5500000000002 124.54999999999998 Z" fill="#595959"/>
<rect x="1513.5" y="67.5" width="14" height="5" fill="#fff" stroke="#6d6d6d" stroke-width="1"/>
<rect x="1520" y="67" width="1" height="6" fill="#6d6d6d"/>
<rect x="1519.5" y="75.5" width="11" height="5" fill="#c5d9ef" stroke="#6d6d6d" stroke-width="1"/>
<rect x="1526" y="75" width="1" height="6" fill="#6d6d6d"/>
<rect x="1513.5" y="84.5" width="14" height="10" fill="#fff" stroke="#6d6d6d" stroke-width="1"/>
<rect x="1520" y="84" width="1" height="11" fill="#6d6d6d"/>
<rect x="1513" y="89" width="15" height="1" fill="#6d6d6d"/>
<path d="M1527.5 80.5 L1531.5 84.5 V70 H1545 V88 H1527.5 Z" fill="#f1f1f1"/>
<path d="M1528.5 73 L1542 85.6 M1541.8 73.4 L1528.2 85.4" stroke="#d9542e" stroke-width="2.8"/>
<path d="M1523.9 121.9 L1529.1 121.9 L1526.5 124.49999999999991 Z" fill="#595959"/>
<path d="M1555.7 66 V70.8 M1577.6 66 V70.8 M1556.5 68.4 H1576.8 M1559 66.4 L1556.6 68.4 L1559 70.4 M1574.3 66.4 L1576.7 68.4 L1574.3 70.4" fill="none" stroke="#3f7fc4" stroke-width="1.1"/>
<rect x="1555.5" y="72.5" width="27" height="20" fill="#fff"/>
<path d="M1562.5 73 V92 M1570.5 73 V92 M1577.5 73 V92 M1556 77.5 H1582 M1556 87.5 H1582" stroke="#b4b4b4" stroke-width="1"/>
<rect x="1555.5" y="72.5" width="27" height="20" fill="none" stroke="#6d6d6d" stroke-width="1"/>
<rect x="1563.2" y="77.9" width="6.6" height="8.9" fill="#3f7fc4"/>
<path d="M1556 92.5 V95.5 Q1556 96.5 1557 96.5 H1561.8 L1563.5 94.5 L1564 96.5 H1570 L1573 93" fill="#fff" stroke="#6d6d6d" stroke-width="1"/>
<path d="M1566.8 121.9 L1572 121.9 L1569.4 124.50000000000003 Z" fill="#595959"/>
<path d="M1618.2 65.6 H1604.4 L1611.4 72.2 L1604.4 78.9 H1618.2" fill="none" stroke="#444" stroke-width="2" stroke-linejoin="miter"/>
<path d="M1682.2 72.5 L1686.9 72.5 L1684.5500000000002 74.85000000000002 Z" fill="#595959"/>
<rect x="1604.5" y="88.5" width="13" height="15" fill="#fff" stroke="#777" stroke-width="1"/>
<rect x="1604" y="88" width="14" height="3.7" fill="#777"/>
<path d="M1611 93.2 V101 M1607.5 97.6 L1611 101.2 L1614.5 97.6" fill="none" stroke="#3f7fc4" stroke-width="1.6"/>
<path d="M1640.1 95.5 L1645.1 95.5 L1642.6 98.0 Z" fill="#595959"/>
<path d="M1605.2 120.2 L1613 112.3 L1617 116.3 L1609.2 124.2 Z" fill="#e8808f"/>
<path d="M1605.2 120.2 L1607.3 118.1 L1611.3 122.1 L1609.2 124.2 Z" fill="#f2b0ba"/>
<rect x="1609" y="124.2" width="8.7" height="1" fill="#666"/>
<path d="M1652 118.4 L1657 118.4 L1654.5 120.9 Z" fill="#595959"/>
<text x="1697.4" y="79.8" font-size="16.3" font-weight="bold" fill="#3f7fc4">A</text>
<text x="1698.6" y="94" font-size="15.8" font-weight="bold" fill="#9a5cc6">Z</text>
<path d="M1710.5 75.2 H1726.8 L1719.8 82.5 V89.2 H1717.3 V82.5 Z" fill="#808080"/>
<path d="M1712.5 76.4 L1717.6 82 V88.2" fill="none" stroke="#f1f1f1" stroke-width="0.9"/>
<circle cx="1759.2" cy="77" r="8.9" fill="#fff" stroke="#3f7fc4" stroke-width="1.8"/>
<path d="M1744.3 91.8 L1752.6 84" stroke="#3f7fc4" stroke-width="3" stroke-linecap="round"/>
<path d="M1725.3 123.8 L1729.9 123.8 L1727.6 126.10000000000007 Z" fill="#595959"/>
<path d="M1770 123.8 L1775.2 123.8 L1772.6 126.40000000000002 Z" fill="#595959"/>
<path d="M1903.3 145.3 L1907.5 141 L1911.7 145.3" fill="none" stroke="#555" stroke-width="1.4"/>
<path d="M94.5 171.9 L101.8 171.9 L98.15 175.55 Z" fill="#555"/>
<rect x="123.3" y="170.0" width="1.6" height="1.6" fill="#8a8a8a"/>
<rect x="123.3" y="174.5" width="1.6" height="1.6" fill="#8a8a8a"/>
<rect x="123.3" y="179.0" width="1.6" height="1.6" fill="#8a8a8a"/>
<path d="M152.6 170.6 L163.2 180.2 M163.2 170.6 L152.6 180.2" stroke="#b4b4b4" stroke-width="1.2"/>
<path d="M187.8 175.6 L192.2 179.8 L200.8 170.8" fill="none" stroke="#b4b4b4" stroke-width="1.5"/>
<text x="223.5" y="179" font-size="12.5" font-family="Liberation Serif" font-style="italic" font-weight="bold" fill="#444">f</text>
<text x="229" y="180.2" font-size="10" font-family="Liberation Serif" font-style="italic" fill="#444">x</text>
<path d="M1905.3 172.6 L1908.6 175.8 L1911.9 172.6" fill="none" stroke="#666" stroke-width="1.5"/>
<rect x="1922" y="2" width="6" height="39" fill="#4b5a8a"/>
<text x="0" y="0" font-size="11.5" fill="#e8ecf8" textLength="38" lengthAdjust="spacingAndGlyphs" transform="translate(1934.8 2) rotate(90)">Toolbox</text>
<rect x="1954" y="2" width="12" height="15" fill="#3f5289"/>
<text x="1957" y="13.5" font-size="10.5" fill="#fff">P</text>
<rect x="1954" y="17.5" width="12" height="2.2" fill="#f0b860"/>
<rect x="1954" y="19.7" width="12" height="25.5" fill="#d3daf0"/>
<rect x="1960" y="26" width="6" height="12" fill="#1f3f8a"/>
<rect x="1954" y="66" width="12" height="1" fill="#cdd1e6"/>
<rect x="1954" y="86" width="12" height="1" fill="#cdd1e6"/>
<rect x="1954" y="106" width="12" height="1" fill="#cdd1e6"/>
<rect x="1954" y="126" width="12" height="1" fill="#cdd1e6"/>
<rect x="1954" y="146" width="12" height="1" fill="#cdd1e6"/>
<rect x="1954" y="166" width="12" height="1" fill="#cdd1e6"/>
<rect x="1954" y="186" width="12" height="1" fill="#cdd1e6"/>
<rect x="1954" y="206" width="12" height="1" fill="#cdd1e6"/>
<rect x="1954" y="226" width="12" height="1" fill="#cdd1e6"/>
<rect x="1954" y="246" width="12" height="1" fill="#cdd1e6"/>
<rect x="1954" y="266" width="12" height="1" fill="#cdd1e6"/>
<rect x="1954" y="286" width="12" height="1" fill="#cdd1e6"/>
<rect x="1954" y="306" width="12" height="1" fill="#cdd1e6"/>
<rect x="1954" y="326" width="12" height="1" fill="#cdd1e6"/>
<rect x="1954" y="346" width="12" height="1" fill="#cdd1e6"/>
<rect x="1954" y="366" width="12" height="1" fill="#cdd1e6"/>
<rect x="1954" y="386" width="12" height="1" fill="#cdd1e6"/>
<rect x="1954" y="406" width="12" height="1" fill="#cdd1e6"/>
<rect x="1954" y="426" width="12" height="1" fill="#cdd1e6"/>
<rect x="1954" y="446" width="12" height="1" fill="#cdd1e6"/>
<text x="1955" y="61" font-size="12" fill="#1a3a7a">C</text>
<path d="M1957.4 82.4 L1958.4 78.6 L1964.8 72.2 L1967.6 75 L1961.2 81.4 Z" fill="#444"/>
<rect x="1954" y="307" width="12" height="19" fill="#3b8bef"/>
<rect x="1954" y="458" width="12" height="19" fill="#e6e6e6"/>
<path d="M1957 467.5 L1962 463.5 V471.5 Z" fill="#555"/>
<rect x="1954" y="501" width="12" height="24" fill="#d0d6ee"/>
<rect x="1957" y="507" width="9" height="12" fill="#a8acbc"/>
<rect x="1954" y="525" width="12" height="297" fill="#ffffff"/>
<text x="1955" y="542" font-size="11" fill="#222">P</text>
<rect x="0" y="0" width="1968" height="2" fill="#000" />
<rect x="0" y="0" width="2" height="824" fill="#000" />
<rect x="1966" y="0" width="2" height="824" fill="#000" />
<rect x="0" y="822" width="1968" height="2" fill="#000" />
</svg>
</body></html>
